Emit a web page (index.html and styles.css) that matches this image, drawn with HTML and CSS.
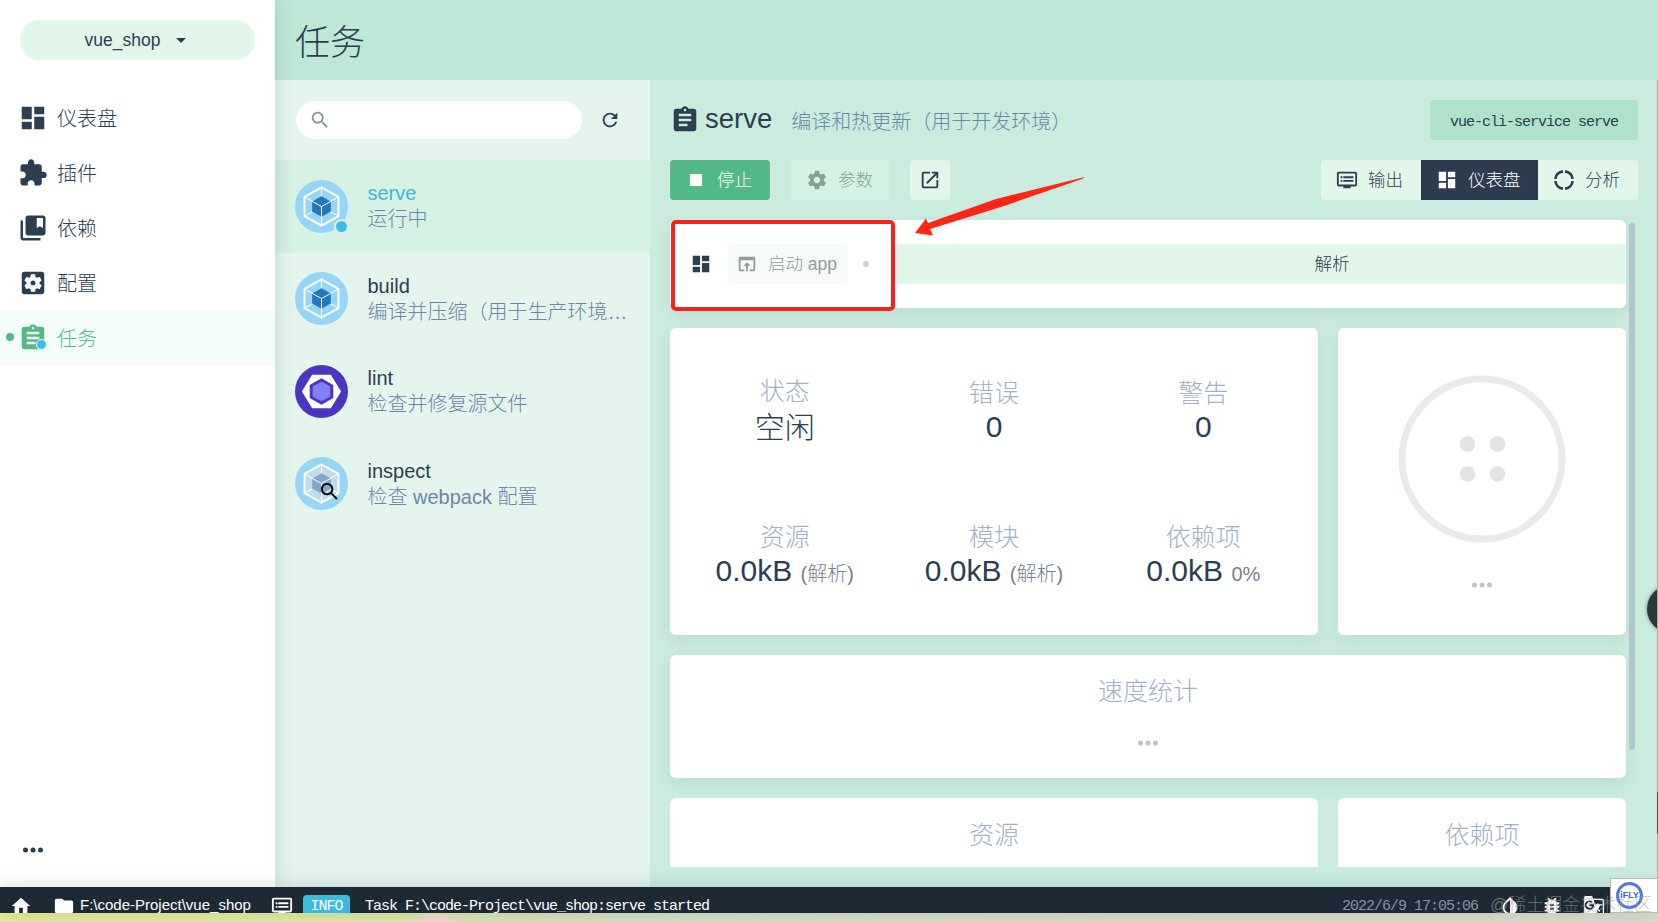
FILE: index.html
```html
<!DOCTYPE html>
<html lang="zh-CN">
<head>
    <meta charset="UTF-8">
    <title>vue_shop - 任务</title>
    <link rel="stylesheet" href="styles.css">
</head>
<body>
    <svg class="symbols" aria-hidden="true">
        <symbol id="dashboard" viewBox="0 0 24 24"><path d="M3 13h8V3H3v10zm0 8h8v-6H3v6zm10 0h8V11h-8v10zm0-18v6h8V3h-8z"/></symbol>
        <symbol id="extension" viewBox="0 0 24 24"><path d="M20.5 11H19V7c0-1.100-.9-2-2-2h-4V3.500C13 2.120 11.880 1 10.500 1S8 2.120 8 3.500V5H4c-1.100 0-1.990.9-1.990 2v3.800H3.500c1.490 0 2.700 1.210 2.700 2.700s-1.210 2.700-2.700 2.700H2V20c0 1.100.9 2 2 2h3.800v-1.500c0-1.490 1.210-2.700 2.700-2.700 1.490 0 2.700 1.210 2.700 2.700V22H17c1.100 0 2-.9 2-2v-4h1.500c1.380 0 2.500-1.120 2.500-2.500S21.880 11 20.500 11z"/></symbol>
        <symbol id="bookmark" viewBox="0 0 24 24"><path d="M4 6H2v14c0 1.100.9 2 2 2h14v-2H4V6z"/><path d="M20 2H8c-1.100 0-2 .9-2 2v12c0 1.100.9 2 2 2h12c1.100 0 2-.9 2-2V4c0-1.100-.9-2-2-2zm0 10l-2.500-1.500L15 12V4h5v8z"/></symbol>
        <symbol id="config" viewBox="0 0 24 24"><path d="M12 10c-1.100 0-2 .9-2 2s.9 2 2 2 2-.9 2-2-.9-2-2-2zm7-7H5c-1.110 0-2 .9-2 2v14c0 1.100.89 2 2 2h14c1.110 0 2-.9 2-2V5c0-1.100-.89-2-2-2zm-1.750 9c0 .23-.02.46-.05.68l1.480 1.160c.13.11.17.3.08.45l-1.400 2.420c-.09.15-.27.21-.43.15l-1.740-.7c-.36.28-.76.51-1.180.69l-.26 1.850c-.03.17-.18.3-.35.3h-2.800c-.17 0-.32-.13-.35-.29l-.26-1.850c-.43-.18-.82-.41-1.180-.69l-1.740.7c-.16.06-.34 0-.43-.15l-1.400-2.420c-.09-.15-.05-.34.08-.45l1.480-1.160c-.03-.23-.05-.46-.05-.69s.02-.46.05-.68l-1.480-1.160c-.13-.11-.17-.3-.08-.45l1.400-2.420c.09-.15.27-.21.43-.15l1.740.7c.36-.28.76-.51 1.180-.69l.26-1.850c.03-.17.18-.3.35-.3h2.800c.17 0 .32.13.35.29l.26 1.850c.43.18.82.41 1.180.69l1.740-.7c.16-.06.34 0 .43.15l1.400 2.420c.09.15.05.34-.08.45l-1.480 1.160c.03.23.05.46.05.69z"/></symbol>
        <symbol id="assignment" viewBox="0 0 24 24"><path d="M19 3h-4.180C14.400 1.840 13.300 1 12 1s-2.400.84-2.820 2H5c-1.100 0-2 .9-2 2v14c0 1.100.9 2 2 2h14c1.100 0 2-.9 2-2V5c0-1.100-.9-2-2-2zm-7 0c.55 0 1 .45 1 1s-.45 1-1 1-1-.45-1-1 .45-1 1-1zm2 14H7v-2h7v2zm3-4H7v-2h10v2zm0-4H7V7h10v2z"/></symbol>
        <symbol id="more" viewBox="0 0 24 24"><circle cx="6" cy="12" r="2"/><circle cx="12" cy="12" r="2"/><circle cx="18" cy="12" r="2"/></symbol>
        <symbol id="search" viewBox="0 0 24 24"><path d="M15.500 14h-.79l-.28-.27C15.410 12.590 16 11.110 16 9.500 16 5.910 13.090 3 9.500 3S3 5.910 3 9.500 5.910 16 9.500 16c1.610 0 3.090-.59 4.230-1.570l.27.28v.79l5 4.990L20.490 19l-4.990-5zm-6 0C7.010 14 5 11.990 5 9.500S7.010 5 9.500 5 14 7.010 14 9.500 11.990 14 9.500 14z"/></symbol>
        <symbol id="refresh" viewBox="0 0 24 24"><path d="M17.650 6.350C16.200 4.900 14.210 4 12 4c-4.420 0-7.990 3.580-7.990 8s3.570 8 7.990 8c3.730 0 6.840-2.550 7.730-6h-2.080c-.82 2.330-3.040 4-5.650 4-3.310 0-6-2.690-6-6s2.690-6 6-6c1.660 0 3.140.69 4.220 1.780L13 11h7V4l-2.350 2.350z"/></symbol>
        <symbol id="settings" viewBox="0 0 24 24"><path d="M19.430 12.980c.04-.32.07-.64.07-.98s-.03-.66-.07-.98l2.110-1.650c.19-.15.24-.42.12-.64l-2-3.460c-.12-.22-.39-.3-.61-.22l-2.490 1c-.52-.4-1.080-.73-1.690-.98l-.38-2.650C14.460 2.180 14.250 2 14 2h-4c-.25 0-.46.18-.49.42l-.38 2.650c-.61.25-1.170.59-1.690.98l-2.490-1c-.23-.09-.49 0-.61.22l-2 3.460c-.13.22-.07.49.12.64l2.110 1.650c-.04.32-.07.65-.07.98s.03.66.07.98l-2.110 1.650c-.19.15-.24.42-.12.64l2 3.460c.12.22.39.3.61.22l2.490-1c.52.4 1.080.73 1.690.98l.38 2.650c.03.24.24.42.49.42h4c.25 0 .46-.18.49-.42l.38-2.650c.61-.25 1.170-.59 1.690-.98l2.490 1c.23.09.49 0 .61-.22l2-3.460c.12-.22.07-.49-.12-.64l-2.110-1.650zM12 15.500c-1.930 0-3.500-1.570-3.500-3.500s1.570-3.500 3.500-3.500 3.500 1.570 3.500 3.500-1.570 3.500-3.500 3.500z"/></symbol>
        <symbol id="open-new" viewBox="0 0 24 24"><path d="M19 19H5V5h7V3H5c-1.110 0-2 .9-2 2v14c0 1.100.89 2 2 2h14c1.100 0 2-.9 2-2v-7h-2v7zM14 3v2h3.590l-9.830 9.830 1.410 1.410L19 6.410V10h2V3h-7z"/></symbol>
        <symbol id="open-browser" viewBox="0 0 24 24"><path d="M19 4H5c-1.110 0-2 .9-2 2v12c0 1.100.89 2 2 2h4v-2H5V8h14v10h-4v2h4c1.100 0 2-.9 2-2V6c0-1.100-.89-2-2-2zm-7 6l-4 4h3v6h2v-6h3l-4-4z"/></symbol>
        <symbol id="dvr" viewBox="0 0 24 24"><path d="M21 3H3c-1.100 0-2 .9-2 2v12c0 1.100.9 2 2 2h5v2h8v-2h5c1.100 0 1.990-.9 1.990-2L23 5c0-1.100-.9-2-2-2zm0 14H3V5h18v12zm-2-9H8v2h11V8zm0 4H8v2h11v-2zM7 8H5v2h2V8zm0 4H5v2h2v-2z"/></symbol>
        <symbol id="ring" viewBox="0 0 24 24"><circle cx="12" cy="12" r="9.500" fill="none" stroke="currentColor" stroke-width="3" pathLength="100" stroke-dasharray="21 4" stroke-dashoffset="-2"/></symbol>
        <symbol id="home" viewBox="0 0 24 24"><path d="M10 20v-6h4v6h5v-8h3L12 3 2 12h3v8z"/></symbol>
        <symbol id="folder" viewBox="0 0 24 24"><path d="M10 4H4c-1.100 0-1.990.9-1.990 2L2 18c0 1.100.9 2 2 2h16c1.100 0 2-.9 2-2V8c0-1.100-.9-2-2-2h-8l-2-2z"/></symbol>
        <symbol id="invert" viewBox="0 0 24 24"><path d="M17.660 7.930L12 2.270 6.340 7.930c-3.120 3.120-3.120 8.190 0 11.310C7.900 20.800 9.950 21.580 12 21.580s4.100-.78 5.660-2.340c3.120-3.120 3.120-8.190 0-11.310zM12 19.590c-1.600 0-3.110-.62-4.240-1.760C6.620 16.690 6 15.190 6 13.590s.62-3.110 1.760-4.240L12 5.100v14.490z"/></symbol>
        <symbol id="bug" viewBox="0 0 24 24"><path d="M20 8h-2.810c-.45-.78-1.070-1.450-1.820-1.960L17 4.410 15.590 3l-2.170 2.170C12.960 5.060 12.490 5 12 5s-.96.06-1.410.17L8.410 3 7 4.410l1.620 1.630C7.880 6.550 7.260 7.220 6.810 8H4v2h2.090c-.05.33-.09.66-.09 1v1H4v2h2v1c0 .34.04.67.09 1H4v2h2.810c1.040 1.790 2.970 3 5.190 3s4.150-1.210 5.190-3H20v-2h-2.090c.05-.33.09-.66.09-1v-1h2v-2h-2v-1c0-.34-.04-.67-.09-1H20V8zm-6 8h-4v-2h4v2zm0-4h-4v-2h4v2z"/></symbol>
        <symbol id="translate" viewBox="0 0 24 24"><path fill-rule="evenodd" d="M21 4H11l-1-3H3a2 2 0 0 0-2 2v15a2 2 0 0 0 2 2h8l1 3h9a2 2 0 0 0 2-2V6a2 2 0 0 0-2-2zM7 16a5 5 0 1 1 3.300-8.700L8.900 8.700A3 3 0 1 0 9.800 12H7v-2h4.900c.5 3.500-1.400 6-4.900 6zM21.500 21a.5.5 0 0 1-.5.5h-7.500L16 19l-1-3.500 3 3 1-1-2.400-2.500c1-1 1.600-2.200 2-3.500H21v-1.300h-4V9h-1.300v1.200h-2.500l-1.600-4.700H21a.5.5 0 0 1 .5.5z"/></symbol>
        <symbol id="webpack" viewBox="0 0 54 54">
            <circle cx="27" cy="27" r="27" fill="#97d5f7"/>
            <g stroke="#fff" stroke-linejoin="round">
                <path class="shell" d="M27 7.500l17.300 9.700v19.600L27 46.500 9.700 36.800V17.200z" stroke-width="1.900"/>
                <path d="M27 7.500v9M27 37v9.500M9.700 17.200l8 4.500M44.300 17.200l-8 4.500M9.700 36.800l8-4.500M44.300 36.800l-8-4.500" fill="none" stroke-width="1.100"/>
                <path class="core" d="M27 16.500l9.500 5.300v10.400L27 37.500l-9.500-5.300V21.800z" stroke-width="0"/>
                <path d="M17.500 21.800L27 27l9.500-5.200M27 27v10.500" fill="none" stroke-width="1"/>
            </g>
        </symbol>
    </svg>

    <div class="app">
        <div class="main">
            <nav class="sidebar">
                <button class="project">
                    <span>vue_shop</span>
                    <i class="caret"></i>
                </button>
                <a class="nav-item"><svg class="icon-nav"><use href="#dashboard"/></svg>仪表盘</a>
                <a class="nav-item"><svg class="icon-nav"><use href="#extension"/></svg>插件</a>
                <a class="nav-item"><svg class="icon-nav"><use href="#bookmark"/></svg>依赖</a>
                <a class="nav-item"><svg class="icon-nav"><use href="#config"/></svg>配置</a>
                <a class="nav-item active"><svg class="icon-nav"><use href="#assignment"/></svg>任务<i class="badge"></i></a>
                <svg class="icon-nav more"><use href="#more"/></svg>
            </nav>

            <div class="page">
                <header class="page-header">任务</header>
                <div class="columns">
                    <section class="tasks">
                        <div class="search-row">
                            <div class="search"><svg class="icon"><use href="#search"/></svg></div>
                            <svg class="icon"><use href="#refresh"/></svg>
                        </div>
                        <div class="task selected">
                            <div class="task-icon"><svg class="logo"><use href="#webpack"/></svg><i class="badge"></i></div>
                            <div class="task-info"><div class="name">serve</div><div class="desc">运行中</div></div>
                        </div>
                        <div class="task">
                            <div class="task-icon"><svg class="logo"><use href="#webpack"/></svg></div>
                            <div class="task-info"><div class="name">build</div><div class="desc">编译并压缩（用于生产环境…</div></div>
                        </div>
                        <div class="task">
                            <div class="task-icon">
                                <svg class="logo" viewBox="0 0 54 54">
                                    <circle cx="27" cy="27" r="27" fill="#4b36c2"/>
                                    <path d="M17.500 10h19L47 27 36.500 44h-19L7 27z" fill="#fff"/>
                                    <path d="M27 13.500l12 6.800v13.400l-12 6.800-12-6.800V20.300z" fill="#4b36c2"/>
                                    <path d="M27 17l9 5v10l-9 5-9-5V22z" fill="#8080f0"/>
                                </svg>
                            </div>
                            <div class="task-info"><div class="name">lint</div><div class="desc">检查并修复源文件</div></div>
                        </div>
                        <div class="task">
                            <div class="task-icon inspect"><svg class="logo"><use href="#webpack"/></svg><svg class="lens"><use href="#search"/></svg></div>
                            <div class="task-info"><div class="name">inspect</div><div class="desc">检查 webpack 配置</div></div>
                        </div>
                    </section>

                    <section class="content">
                        <div class="task-header">
                            <svg class="icon-title"><use href="#assignment"/></svg>
                            <span class="title">serve</span>
                            <span class="subtitle">编译和热更新（用于开发环境）</span>
                            <code class="command">vue-cli-service serve</code>
                        </div>
                        <div class="actions">
                            <button class="btn primary"><i class="stop"></i><span>停止</span></button>
                            <button class="btn disabled"><svg class="icon"><use href="#settings"/></svg><span>参数</span></button>
                            <button class="btn square"><svg class="icon"><use href="#open-new"/></svg></button>
                            <div class="tabs">
                                <button class="btn"><svg class="icon"><use href="#dvr"/></svg><span>输出</span></button>
                                <button class="btn current"><svg class="icon"><use href="#dashboard"/></svg><span>仪表盘</span></button>
                                <button class="btn"><svg class="icon"><use href="#ring"/></svg><span>分析</span></button>
                            </div>
                        </div>

                        <div class="dashboard">
                            <div class="card toolbar">
                                <svg class="icon"><use href="#dashboard"/></svg>
                                <button class="btn launch"><svg class="icon"><use href="#open-browser"/></svg><span>启动 app</span></button>
                                <i class="dot"></i>
                                <div class="mode">解析</div>
                            </div>
                            <div class="card stats">
                                <div class="stat status"><div class="label">状态</div><div class="value">空闲</div></div>
                                <div class="stat"><div class="label">错误</div><div class="value">0</div></div>
                                <div class="stat"><div class="label">警告</div><div class="value">0</div></div>
                                <div class="stat"><div class="label">资源</div><div class="value">0.0kB <small>(解析)</small></div></div>
                                <div class="stat"><div class="label">模块</div><div class="value">0.0kB <small>(解析)</small></div></div>
                                <div class="stat"><div class="label">依赖项</div><div class="value">0.0kB <small>0%</small></div></div>
                            </div>
                            <div class="card progress">
                                <svg class="circle" viewBox="0 0 168 168">
                                    <circle cx="84" cy="84" r="80" fill="none" stroke="#e9ebeb" stroke-width="7"/>
                                    <g fill="#e3e3e3"><circle cx="69.500" cy="69" r="7.800"/><circle cx="99.500" cy="69" r="7.800"/><circle cx="69.500" cy="99" r="7.800"/><circle cx="99.500" cy="99" r="7.800"/></g>
                                </svg>
                                <svg class="icon-dots"><use href="#more"/></svg>
                            </div>
                            <div class="card speed">
                                <div class="label">速度统计</div>
                                <svg class="icon-dots"><use href="#more"/></svg>
                            </div>
                            <div class="card cut"><div class="label">资源</div></div>
                            <div class="card cut"><div class="label">依赖项</div></div>
                        </div>
                        <div class="scrollbar"></div>
                    </section>
                </div>
            </div>
        </div>

        <footer class="status-bar">
            <svg class="icon"><use href="#home"/></svg>
            <svg class="icon folder"><use href="#folder"/></svg>
            <span class="path">F:\code-Project\vue_shop</span>
            <svg class="icon log"><use href="#dvr"/></svg>
            <span class="info">INFO</span>
            <span class="message">Task F:\code-Project\vue_shop:serve started</span>
            <span class="date">2022/6/9 17:05:06</span>
            <svg class="icon tool"><use href="#invert"/></svg>
            <svg class="icon tool"><use href="#bug"/></svg>
            <svg class="icon tool"><use href="#translate"/></svg>
        </footer>
        <div class="desktop"></div>
    </div>

    <div class="mark"></div>
    <svg class="arrow" viewBox="0 0 172 62"><path d="M171 1L168 3 90 30 16 53 19 59.500 1 57 12 42.500 14 47 82 23z" fill="#ff2413"/></svg>
    <div class="side-button"></div>
    <div class="edge"></div>
    <div class="ifly"><span>iFLY</span></div>
    <div class="watermark">@稀土掘金技术社区</div>
</body>
</html>
```
FILE: styles.css
```css
:root {
    --dark: #2c3e50;
    --green: #53b987;
    --blue: #3cbfe2;
    --light: #e1f7ea;
    --muted: #6c86a8;
    --label: #a3b1c4;
    --mono: "Liberation Mono", monospace;
}

* {
    box-sizing: border-box;
}

body {
    margin: 0;
    width: 1658px;
    height: 922px;
    overflow: hidden;
    position: relative;
    font-family: "Liberation Sans", "Noto Sans CJK SC", sans-serif;
    font-weight: 300;
    font-size: 20px;
    color: var(--dark);
}

svg {
    fill: currentColor;
    flex: none;
}

button {
    border: none;
    font: inherit;
    color: inherit;
}

.symbols {
    position: absolute;
    width: 0;
    height: 0;
}

.icon {
    width: 22px;
    height: 22px;
}

.icon-nav {
    width: 30px;
    height: 30px;
}

.icon-dots {
    width: 30px;
    height: 30px;
    color: #c1c3c3;
}

.app {
    display: flex;
    flex-direction: column;
    height: 922px;
}

.main {
    display: flex;
    height: 887px;
}

/* Sidebar */
.sidebar {
    width: 275px;
    flex: none;
    display: flex;
    flex-direction: column;
    background: #fff;
    box-shadow: 0 0 20px rgba(0, 50, 30, 0.16);
    z-index: 1;
}

.project {
    height: 40px;
    margin: 20px 20px 30px;
    padding: 0 10px 0 6px;
    border-radius: 20px;
    background: var(--light);
    display: flex;
    align-items: center;
    justify-content: center;
    gap: 16px;
    font-size: 17.5px;
}

.caret {
    border: 5px solid transparent;
    border-top-color: var(--dark);
    border-bottom: none;
}

.nav-item {
    height: 55px;
    padding-left: 18px;
    display: flex;
    align-items: center;
    gap: 9px;
    position: relative;
}

.nav-item.active {
    color: var(--green);
    background: #f3fcf8;
}

.nav-item.active::before {
    content: "";
    position: absolute;
    left: 6px;
    top: 23px;
    width: 8px;
    height: 8px;
    border-radius: 50%;
    background: var(--green);
}

.badge {
    position: absolute;
    border-radius: 50%;
    background: var(--blue);
}

.nav-item .badge {
    left: 36px;
    top: 29px;
    width: 11px;
    height: 11px;
    border: 1px solid #f3fcf8;
}

.more {
    margin: auto 0 22px 18px;
}

/* Page */
.page {
    flex: 1;
    display: flex;
    flex-direction: column;
    background: #cbebdf;
}

.page-header {
    height: 80px;
    padding: 0 20px;
    line-height: 85px;
    font-size: 35px;
    background: #bfe7d7;
}

.columns {
    flex: 1;
    display: flex;
}

.tasks {
    width: 375px;
    flex: none;
    background: #e4f5ee;
}

.search-row {
    height: 80px;
    padding: 0 29px 0 21px;
    display: flex;
    align-items: center;
    justify-content: space-between;
}

.search {
    width: 286px;
    height: 38px;
    padding: 0 13px;
    border-radius: 19px;
    background: #fff;
    color: #8598a4;
    display: flex;
    align-items: center;
}

.task {
    height: 92.5px;
    padding: 0 20px;
    display: flex;
    align-items: center;
    gap: 19.5px;
}

.task.selected {
    background: #d7f1e5;
}

.task-icon {
    width: 53px;
    height: 53px;
    flex: none;
    position: relative;
}

.logo {
    width: 53px;
    height: 53px;
    display: block;
    --shell: #97d5f7;
    --core: #2477bd;
}

.inspect .logo {
    --shell: #c1dbea;
    --core: #84a6c9;
}

.shell {
    fill: var(--shell);
}

.core {
    fill: var(--core);
}

.task-icon .badge {
    right: -1px;
    bottom: -1px;
    width: 15px;
    height: 15px;
    border: 2px solid #d7f1e5;
}

.lens {
    position: absolute;
    left: 23px;
    top: 23px;
    width: 23px;
    height: 23px;
    color: #000;
}

.task-info {
    min-width: 0;
    line-height: 26px;
}

.selected .name {
    color: #42b8d9;
}

.desc {
    color: var(--muted);
    white-space: nowrap;
    overflow: hidden;
    text-overflow: ellipsis;
}

/* Task details */
.content {
    flex: 1;
    padding: 20px;
    position: relative;
}

.task-header {
    height: 40px;
    display: flex;
    align-items: center;
}

.icon-title {
    width: 30px;
    height: 30px;
}

.title {
    margin: 0 19px 2px 5px;
    font-size: 27.5px;
}

.subtitle {
    color: var(--muted);
    padding-top: 1px;
}

.command {
    margin-left: auto;
    height: 40px;
    padding: 3px 20px 0;
    line-height: 40px;
    border-radius: 4px;
    background: #afe1cb;
    font-family: var(--mono);
    font-size: 15px;
    letter-spacing: -1px;
}

.actions {
    height: 40px;
    margin: 20px 0;
    display: flex;
    gap: 20px;
}

.btn {
    height: 40px;
    padding: 0 16px;
    border-radius: 4px;
    background: var(--light);
    display: flex;
    align-items: center;
    gap: 10px;
    font-size: 17.5px;
    white-space: nowrap;
}

.btn span {
    margin-bottom: 3px;
}

.btn.primary {
    width: 100px;
    padding-left: 20px;
    gap: 15px;
    color: #fff;
    background: var(--green);
}

.stop {
    width: 12px;
    height: 12px;
    background: #fff;
}

.btn.disabled {
    width: 100px;
    color: #8a9f97;
    background: #d5f1e4;
}

.btn.square {
    width: 40px;
    padding: 0 9px;
}

.tabs {
    margin-left: auto;
    display: flex;
    border-radius: 4px;
    overflow: hidden;
}

.tabs .btn {
    width: 100px;
    border-radius: 0;
    padding-left: 15px;
}

.tabs .btn.current {
    width: 117px;
    color: #fff;
    background: #2c3b4e;
}

.dashboard {
    width: 956px;
    height: 647px;
    display: grid;
    grid-template-columns: 648px 288px;
    grid-template-rows: 88px 307px 123px 69px;
    gap: 20px;
}

.card {
    background: #fff;
    border-radius: 6px;
    box-shadow: 0 6px 16px rgba(60, 140, 110, 0.12);
}

.toolbar {
    grid-column: 1 / 3;
    display: flex;
    align-items: center;
    padding-left: 20px;
}

.launch {
    width: 120px;
    margin-left: 16px;
    padding: 0 8px;
    color: #939a9a;
    background: #f6faf9;
}

.dot {
    width: 6px;
    height: 6px;
    margin: 0 22px 0 15px;
    border-radius: 50%;
    background: #d2d5d4;
}

.mode {
    flex: 1;
    height: 40px;
    padding-left: 147px;
    line-height: 40px;
    text-align: center;
    font-size: 17.5px;
    background: var(--light);
}

.stats {
    padding: 20px 10px 0;
    display: grid;
    grid-template-columns: repeat(3, 1fr);
    grid-template-rows: 144px 143px;
}

.stat {
    text-align: center;
    padding-top: 28px;
}

.label {
    color: var(--label);
    font-size: 25px;
    line-height: 36px;
    text-align: center;
}

.stat .label {
    line-height: 35px;
}

.value {
    font-size: 30px;
    line-height: 32px;
}

.status .label {
    margin-top: -2px;
}

.status .value {
    line-height: 38px;
}

.value small {
    font-size: 20px;
    color: #76818c;
}

.progress {
    display: flex;
    flex-direction: column;
    align-items: center;
    padding-top: 47px;
}

.circle {
    width: 168px;
    height: 168px;
    margin-bottom: 27px;
}

.speed {
    grid-column: 1 / 3;
    padding-top: 18px;
    display: flex;
    flex-direction: column;
    align-items: center;
    gap: 19px;
}

.cut {
    padding-top: 19px;
    border-radius: 6px 6px 0 0;
    box-shadow: none;
}

.scrollbar {
    position: absolute;
    right: 23px;
    top: 143px;
    width: 6px;
    height: 527px;
    border-radius: 3px;
    background: #b2c5cf;
}

/* Status bar */
.status-bar {
    height: 26px;
    flex: none;
    padding: 8px 0 0 10px;
    display: flex;
    align-items: flex-start;
    overflow: hidden;
    background: #1d2935;
    color: #fff;
    font-size: 15px;
    line-height: 20px;
    box-shadow: 0 0 20px rgba(0, 50, 30, 0.16);
    z-index: 2;
}

.folder {
    margin: 0 5px 0 21px;
}

.path {
    width: 191px;
}

.log {
    margin-right: 10px;
}

.info {
    width: 47px;
    height: 24px;
    line-height: 24px;
    text-align: center;
    border-radius: 4px;
    background: #3cbadf;
}

.info,
.message,
.date {
    font-family: var(--mono);
    font-size: 15px;
    letter-spacing: -1px;
}

.message {
    margin-left: 15px;
    padding-top: 2px;
}

.date {
    margin-left: auto;
    padding-top: 2px;
    margin-right: 21px;
    color: #8195a8;
}

.tool {
    margin-right: 20px;
}

.tool:last-child {
    margin-right: 53px;
}

.desktop {
    height: 9px;
    background:
        radial-gradient(ellipse 26px 7px at 435px 7px, #f3d9cf 60%, transparent),
        linear-gradient(90deg, #e6ec9b 0, #dfe8a9 400px, #dce2bd 520px, #d5e3cb 700px, #dcdccb 1000px, #dadfce 100%);
}

/* Overlays */
.mark {
    position: absolute;
    left: 671px;
    top: 220px;
    width: 224px;
    height: 91px;
    border: 4px solid #f5231a;
    border-radius: 5px;
}

.arrow {
    position: absolute;
    left: 914px;
    top: 176px;
    width: 172px;
    height: 62px;
}

.side-button {
    position: absolute;
    left: 1647px;
    top: 585px;
    width: 48px;
    height: 48px;
    border-radius: 50%;
    background: #2b3638;
    box-shadow: 0 0 4px rgba(0, 0, 0, 0.4);
}

.edge {
    position: absolute;
    right: 0;
    top: 80px;
    width: 1px;
    height: 798px;
    background: linear-gradient(#a3b5ae 712px, #4a5552 712px 754px, #a3b5ae 754px);
}

.ifly {
    position: absolute;
    right: 0;
    top: 878px;
    width: 48px;
    height: 35px;
    padding: 3px 0 0 5px;
    border: 1px solid #b5bcb9;
    background: #fff;
    z-index: 3;
}

.ifly span {
    display: block;
    width: 27px;
    height: 27px;
    border: 3px solid #5478e0;
    border-radius: 50%;
    line-height: 21px;
    text-align: center;
    font-size: 9px;
    font-weight: 700;
    color: #3d62d8;
}

.watermark {
    position: absolute;
    left: 1490px;
    top: 892px;
    font-size: 18px;
    line-height: 26px;
    color: rgba(150, 155, 158, 0.6);
    white-space: nowrap;
    z-index: 4;
}
```
